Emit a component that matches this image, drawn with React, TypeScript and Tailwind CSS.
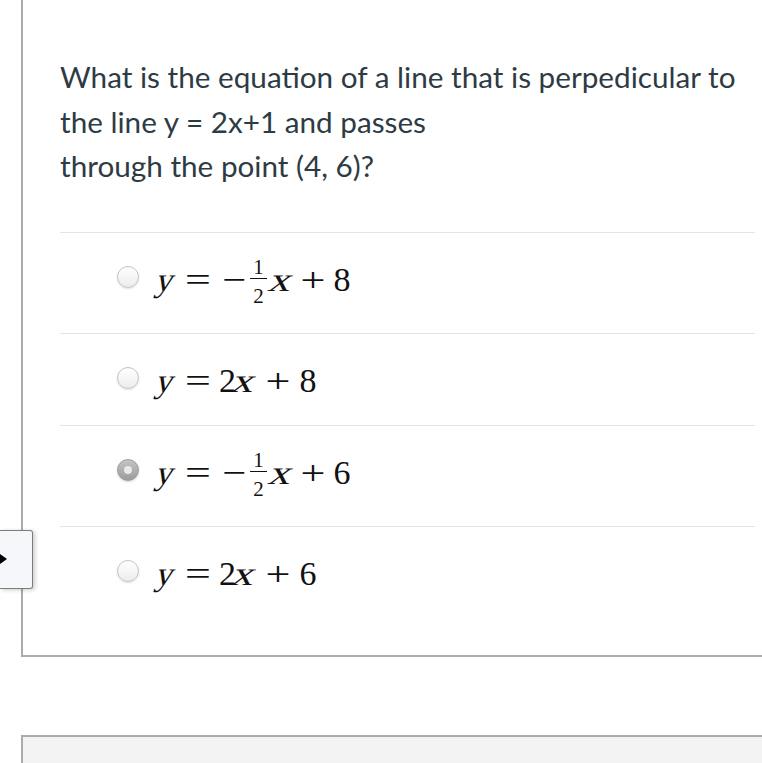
import React from "react";

const serif = "font-['Liberation_Serif',_serif]";

function Radio({ checked = false }: { checked?: boolean }) {
  if (checked) {
    return (
      <div className="mt-[33px] w-[22px] h-[22px] shrink-0 rounded-full border border-[#9a9a9a] bg-gradient-to-b from-[#c4c4c4] to-[#9c9c9c] flex items-center justify-center shadow-[0_1px_2px_rgba(0,0,0,0.15)]">
        <div className="w-[8px] h-[8px] rounded-full bg-[#e8e8e8]" />
      </div>
    );
  }
  return (
    <div className="mt-[33px] w-[22px] h-[22px] shrink-0 rounded-full border border-[#c4c4c4] bg-gradient-to-b from-[#ffffff] to-[#ececec] shadow-[0_1px_2px_rgba(0,0,0,0.12)]" />
  );
}

// italic face isn't available, so slant the upright glyph
function Var({ v, className = "" }: { v: string; className?: string }) {
  return (
    <span className={`inline-block w-[18px] text-center -skew-x-[15deg] ${className}`}>
      {v}
    </span>
  );
}

function Frac() {
  return (
    <div className={`-mt-[6px] ml-[5.5px] w-[17px] flex flex-col items-center ${serif} text-[21px] leading-[18px]`}>
      <span>1</span>
      <div className="mt-[2px] h-px w-full bg-[#111]" />
      <span className="mt-[8px]">2</span>
    </div>
  );
}

function FracEquation({ c }: { c: string }) {
  return (
    <div className={`ml-[18px] mt-[31px] h-[32px] flex items-start ${serif} text-[34px] leading-[32px] text-[#111]`}>
      <Var v="y" className="w-[17px]" />
      <span className="ml-[9.5px] w-[26px] text-center inline-block scale-x-[1.35]">=</span>
      <span className="ml-[12px] w-[22px] text-center inline-block scale-x-[1.25]">−</span>
      <Frac />
      <Var v="x" className="ml-[5.5px] scale-x-[1.3]" />
      <span className="ml-[10px] w-[24px] text-center inline-block scale-x-[1.3]">+</span>
      <span className="ml-[9px] w-[16px] text-center">{c}</span>
    </div>
  );
}

function LinearEquation({ c }: { c: string }) {
  return (
    <div className={`ml-[18px] mt-[31px] h-[32px] flex items-start ${serif} text-[34px] leading-[32px] text-[#111]`}>
      <Var v="y" className="w-[17px]" />
      <span className="ml-[9.5px] w-[26px] text-center inline-block scale-x-[1.35]">=</span>
      <span className="ml-[8.5px] w-[16px] text-center">2</span>
      <Var v="x" className="ml-[0.5px] scale-x-[1.3]" />
      <span className="ml-[12.5px] w-[24px] text-center inline-block scale-x-[1.3]">+</span>
      <span className="ml-[9.5px] w-[16px] text-center">{c}</span>
    </div>
  );
}

export default function App() {
  return (
    <div className="relative w-[762px] h-[763px] overflow-hidden bg-white font-['Lato',_sans-serif]">
      {/* question card */}
      <div className="ml-[21px] w-[900px] border-l-2 border-b-2 border-[#ababab] pl-[37px]">
        <div className="w-[695px]">
          <div className="h-[232px] pt-[55px] text-[29.7px] leading-[44.5px] text-[#2d3b45] whitespace-nowrap">
            What is the equation of a line that is perpedicular to
            <br />
            the line y = 2x+1 and passes
            <br />
            through the point (4, 6)?
          </div>

          <div className="h-[101px] border-t border-[#e4e4e4] pl-[57px] flex items-start">
            <Radio />
            <FracEquation c="8" />
          </div>
          <div className="h-[92px] border-t border-[#e4e4e4] pl-[57px] flex items-start">
            <Radio />
            <LinearEquation c="8" />
          </div>
          <div className="h-[101px] border-t border-[#e4e4e4] pl-[57px] flex items-start">
            <Radio checked />
            <FracEquation c="6" />
          </div>
          <div className="h-[129px] border-t border-[#e4e4e4] pl-[57px] flex items-start">
            <Radio />
            <LinearEquation c="6" />
          </div>
        </div>
      </div>

      {/* next card */}
      <div className="mt-[78px] ml-[21px] h-[40px] w-[900px] border-t-2 border-l-2 border-[#ababab] bg-[#f3f3f3]" />

      {/* side tab */}
      <div className="absolute left-0 top-[530px] w-[33px] h-[59px] border border-l-0 border-[#7c7c7c] rounded-r-[3px] bg-[#f6f7fb] shadow-[2px_1px_4px_rgba(0,0,0,0.2)]">
        <svg className="absolute left-0 top-[23px]" width="8" height="10" viewBox="0 0 8 10">
          <polygon points="0,0 7,5 0,10" fill="#000" />
        </svg>
      </div>
    </div>
  );
}
